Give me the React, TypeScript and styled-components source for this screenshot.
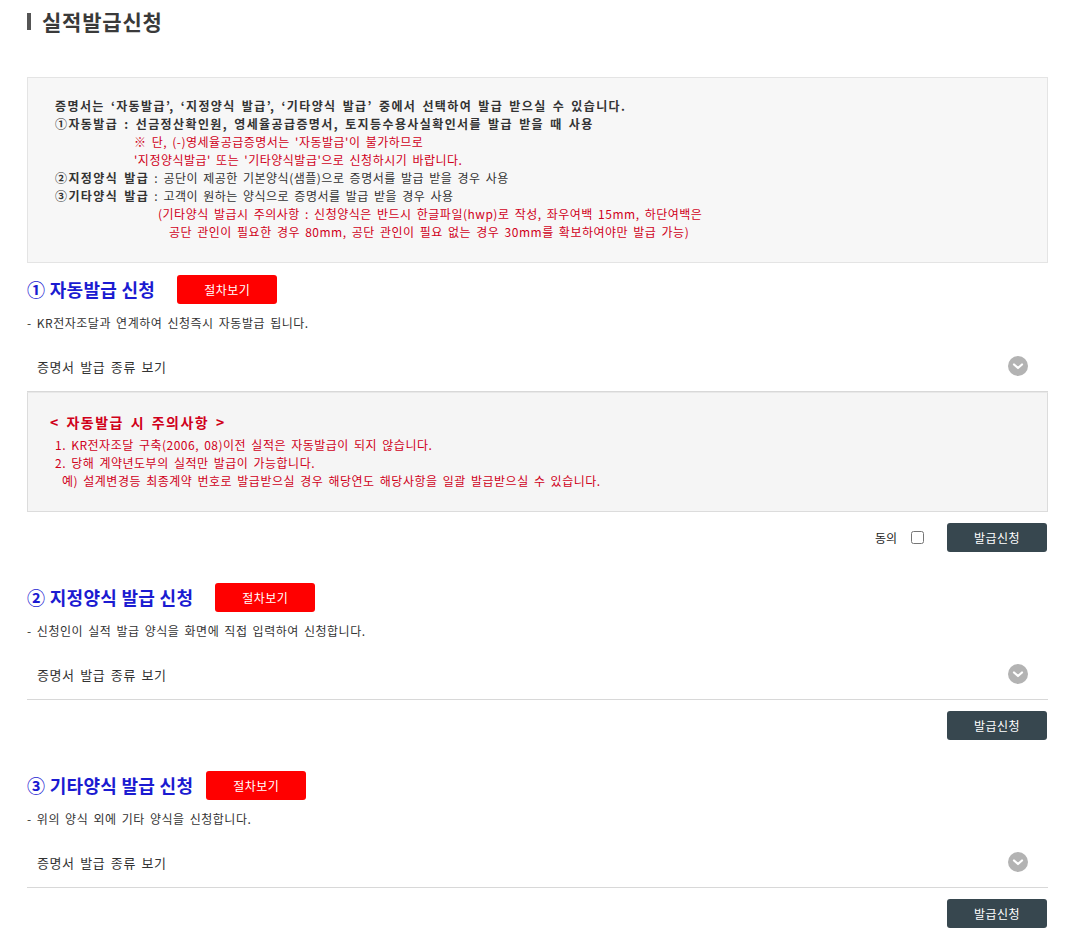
import React from 'react'
import styled, { createGlobalStyle } from 'styled-components'

const GlobalStyle = createGlobalStyle`
  body {
    margin: 0;
    background: #fff;
    font-family: "Noto Sans CJK KR", "Noto Sans", sans-serif;
    color: #333;
  }
`

const Page = styled.div`
  width: 1021px;
  padding: 0 0 10px 27px;
`

const PageTitle = styled.h2`
  display: flex;
  align-items: center;
  gap: 11px;
  margin: 0;
  padding-top: 7px;
  height: 28px;
  font-size: 21px;
  font-weight: 700;
  letter-spacing: 0.8px;
  color: #3a3a3a;
  &::before {
    content: '';
    width: 4px;
    height: 17px;
    background: #555;
  }
`

// Gulim-like spacing for the body copy
const Spaced = `
  letter-spacing: 0.5px;
  word-spacing: 2px;
`

const InfoBox = styled.div`
  margin-top: 42px;
  padding: 19px 20px 21px 27px;
  background: #f7f7f7;
  border: 1px solid #e4e4e4;
  font-size: 12px;
  line-height: 18px;
  ${Spaced}
`

const InfoLine = styled.div<{ $indent?: number; $red?: boolean; $bold?: boolean }>`
  padding-left: ${p => p.$indent || 0}px;
  color: ${p => (p.$red ? '#d0001a' : '#333')};
  font-weight: ${p => (p.$bold ? 700 : 400)};
  letter-spacing: ${p => (p.$bold ? '1.4px' : '0.5px')};
  white-space: nowrap;
`

const Strong = styled.b`
  font-weight: 700;
  letter-spacing: 1.4px;
`

const Section = styled.section`
  margin-top: 12px;
  & + & {
    margin-top: 31px;
  }
`

const HeaderRow = styled.div`
  display: flex;
  align-items: center;
  height: 28px;
`

const SectionTitle = styled.h3<{ $gap: number }>`
  margin: 0 ${p => p.$gap}px 0 0;
  font-size: 18px;
  font-weight: 700;
  color: #1b1bd1;
  letter-spacing: 0.3px;
`

const RedButton = styled.button`
  width: 100px;
  height: 29px;
  border: 0;
  border-radius: 3px;
  background: #ff0000;
  color: #fff;
  font-family: inherit;
  font-size: 12px;
  letter-spacing: 0.5px;
  cursor: pointer;
`

const Desc = styled.p`
  margin: 12px 0 0;
  font-size: 12px;
  line-height: 16px;
  color: #333;
  ${Spaced}
`

const Accordion = styled.div`
  display: flex;
  align-items: center;
  justify-content: space-between;
  margin-top: 10px;
  height: 50px;
  padding: 0 20px 0 10px;
  border-bottom: 1px solid #d8d8d8;
  font-size: 13px;
  letter-spacing: 0.6px;
  word-spacing: 2px;
  color: #333;
`

const Chevron = () => (
  <svg width="20" height="20" viewBox="0 0 20 20">
    <circle cx="10" cy="10" r="10" fill="#b3b3b3" />
    <path d="M6 8.5 L10 12 L14 8.5" fill="none" stroke="#fff" strokeWidth="2.2" strokeLinecap="round" strokeLinejoin="round" />
  </svg>
)

const Notice = styled.div`
  padding: 20px 22px 21px;
  background: #f5f5f5;
  border: 1px solid #dcdcdc;
  border-top: 1px solid #e8e8e8;
  color: #d0001a;
`

const NoticeTitle = styled.div`
  font-size: 14px;
  font-weight: 700;
  line-height: 18px;
  letter-spacing: 1.5px;
  word-spacing: 2px;
`

const NoticeList = styled.div`
  margin-top: 5px;
  font-size: 12px;
  line-height: 18px;
  ${Spaced}
`

const NoticeItem = styled.div<{ $indent?: number }>`
  padding-left: ${p => p.$indent || 5}px;
`

const ActionRow = styled.div`
  display: flex;
  justify-content: flex-end;
  align-items: center;
  margin-top: 11px;
  padding-right: 1px;
`

const AgreeLabel = styled.label`
  display: flex;
  align-items: center;
  margin-right: 23px;
  font-size: 12px;
  color: #222;
  input {
    width: 13px;
    height: 13px;
    margin: 0 0 0 14px;
  }
`

const DarkButton = styled.button`
  width: 100px;
  height: 29px;
  border: 0;
  border-radius: 3px;
  background: #37474f;
  color: #fff;
  font-family: inherit;
  font-size: 12px;
  letter-spacing: 0.5px;
  cursor: pointer;
`

interface SectionProps {
  title: string;
  gap: number;
  desc: string;
  agree?: boolean;
  children?: React.ReactNode;
}

const ApplySection = ({ title, gap, desc, agree, children }: SectionProps) => (
  <Section>
    <HeaderRow>
      <SectionTitle $gap={gap}>{title}</SectionTitle>
      <RedButton>절차보기</RedButton>
    </HeaderRow>
    <Desc>{desc}</Desc>
    <Accordion>
      <span>증명서 발급 종류 보기</span>
      <Chevron />
    </Accordion>
    {children}
    <ActionRow>
      {agree && (
        <AgreeLabel>
          동의
          <input type="checkbox" />
        </AgreeLabel>
      )}
      <DarkButton>발급신청</DarkButton>
    </ActionRow>
  </Section>
)

const App = () => {
  return (
    <Page>
      <GlobalStyle />
      <PageTitle>실적발급신청</PageTitle>
      <InfoBox>
        <InfoLine $bold>증명서는 ‘자동발급’, ‘지정양식 발급’, ‘기타양식 발급’ 중에서 선택하여 발급 받으실 수 있습니다.</InfoLine>
        <InfoLine $bold>①자동발급 : 선금정산확인원, 영세율공급증명서, 토지등수용사실확인서를 발급 받을 때 사용</InfoLine>
        <InfoLine $red $indent={79}>※ 단, (-)영세율공급증명서는 '자동발급'이 불가하므로</InfoLine>
        <InfoLine $red $indent={79}>'지정양식발급' 또는 '기타양식발급'으로 신청하시기 바랍니다.</InfoLine>
        <InfoLine><Strong>②지정양식 발급</Strong> : 공단이 제공한 기본양식(샘플)으로 증명서를 발급 받을 경우 사용</InfoLine>
        <InfoLine><Strong>③기타양식 발급</Strong> : 고객이 원하는 양식으로 증명서를 발급 받을 경우 사용</InfoLine>
        <InfoLine $red $indent={103}>(기타양식 발급시 주의사항 : 신청양식은 반드시 한글파일(hwp)로 작성, 좌우여백 15mm, 하단여백은</InfoLine>
        <InfoLine $red $indent={114}>공단 관인이 필요한 경우 80mm, 공단 관인이 필요 없는 경우 30mm를 확보하여야만 발급 가능)</InfoLine>
      </InfoBox>

      <ApplySection title="① 자동발급 신청" gap={22} desc="- KR전자조달과 연계하여 신청즉시 자동발급 됩니다." agree>
        <Notice>
          <NoticeTitle>&lt; 자동발급 시 주의사항 &gt;</NoticeTitle>
          <NoticeList>
            <NoticeItem>1. KR전자조달 구축(2006, 08)이전 실적은 자동발급이 되지 않습니다.</NoticeItem>
            <NoticeItem>2. 당해 계약년도부의 실적만 발급이 가능합니다.</NoticeItem>
            <NoticeItem $indent={12}>예) 설계변경등 최종계약 번호로 발급받으실 경우 해당연도 해당사항을 일괄 발급받으실 수 있습니다.</NoticeItem>
          </NoticeList>
        </Notice>
      </ApplySection>

      <ApplySection title="② 지정양식 발급 신청" gap={22} desc="- 신청인이 실적 발급 양식을 화면에 직접 입력하여 신청합니다." />

      <ApplySection title="③ 기타양식 발급 신청" gap={13} desc="- 위의 양식 외에 기타 양식을 신청합니다." />
    </Page>
  )
}

export default App
